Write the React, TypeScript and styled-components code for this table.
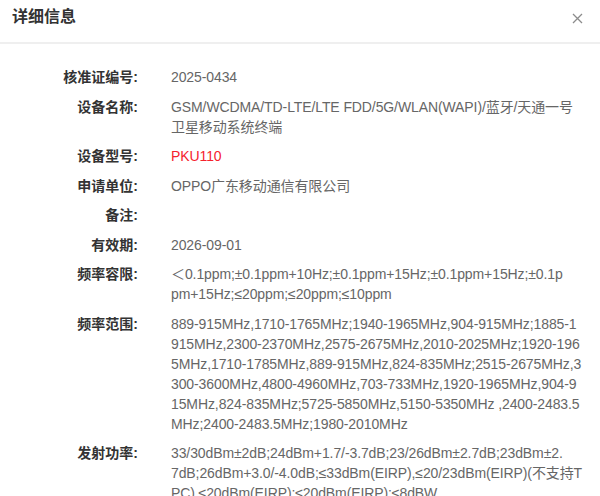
import React from 'react'
import styled, { createGlobalStyle } from 'styled-components'

const GlobalStyle = createGlobalStyle`
  html, body {
    margin: 0;
    padding: 0;
    background: #fff;
  }
  body {
    font-family: "Liberation Sans", "Noto Sans CJK SC", sans-serif;
    overflow: hidden;
  }
`

const Dialog = styled.div`
  width: 600px;
  height: 496px;
  background: #fff;
  overflow: hidden;
`

const Header = styled.div`
  height: 42px;
  padding: 0 12px;
  display: flex;
  align-items: center;
  justify-content: space-between;
  border-bottom: 2px solid #efefef;
`

const Title = styled.h3`
  margin: 0;
  font-size: 16px;
  font-weight: 700;
  color: #333;
  line-height: 22px;
  padding-bottom: 8px;
`

const CloseButton = styled.button`
  width: 22px;
  height: 22px;
  padding: 0;
  margin: 0 0 6px 0;
  border: none;
  background: none;
  display: flex;
  align-items: center;
  justify-content: center;
  cursor: pointer;
`

const Body = styled.div`
  padding-top: 23px;
  display: flex;
  flex-direction: column;
  gap: 9.5px;
`

const Row = styled.div`
  display: grid;
  grid-template-columns: 138px 416px;
  column-gap: 33px;
  font-size: 14px;
  line-height: 20px;
`

const Label = styled.div`
  text-align: right;
  font-weight: 700;
  color: #333;
  white-space: nowrap;
`

const Value = styled.div<{ $accent?: boolean }>`
  color: ${({ $accent }) => ($accent ? '#f5222d' : '#666')};
  letter-spacing: -0.1px;
  min-height: 20px;
`

const Line = styled.span`
  display: block;
  white-space: nowrap;
`

// lines are broken where the source page breaks them
const rows: { label: string; lines: string[]; accent?: boolean }[] = [
  { label: '核准证编号', lines: ['2025-0434'] },
  {
    label: '设备名称',
    lines: ['GSM/WCDMA/TD-LTE/LTE FDD/5G/WLAN(WAPI)/蓝牙/天通一号', '卫星移动系统终端'],
  },
  { label: '设备型号', lines: ['PKU110'], accent: true },
  { label: '申请单位', lines: ['OPPO广东移动通信有限公司'] },
  { label: '备注', lines: [] },
  { label: '有效期', lines: ['2026-09-01'] },
  {
    label: '频率容限',
    lines: [
      '＜0.1ppm;±0.1ppm+10Hz;±0.1ppm+15Hz;±0.1ppm+15Hz;±0.1p',
      'pm+15Hz;≤20ppm;≤20ppm;≤10ppm',
    ],
  },
  {
    label: '频率范围',
    lines: [
      '889-915MHz,1710-1765MHz;1940-1965MHz,904-915MHz;1885-1',
      '915MHz,2300-2370MHz,2575-2675MHz,2010-2025MHz;1920-196',
      '5MHz,1710-1785MHz,889-915MHz,824-835MHz;2515-2675MHz,3',
      '300-3600MHz,4800-4960MHz,703-733MHz,1920-1965MHz,904-9',
      '15MHz,824-835MHz;5725-5850MHz,5150-5350MHz ,2400-2483.5',
      'MHz;2400-2483.5MHz;1980-2010MHz',
    ],
  },
  {
    label: '发射功率',
    lines: [
      '33/30dBm±2dB;24dBm+1.7/-3.7dB;23/26dBm±2.7dB;23dBm±2.',
      '7dB;26dBm+3.0/-4.0dB;≤33dBm(EIRP),≤20/23dBm(EIRP)(不支持T',
      'PC),≤20dBm(EIRP);≤20dBm(EIRP);≤8dBW',
    ],
  },
]

export default function App() {
  return (
    <>
      <GlobalStyle />
      <Dialog>
        <Header>
          <Title>详细信息</Title>
          <CloseButton aria-label="close">
            <svg width="11" height="11" viewBox="0 0 11 11">
              <path d="M1 1L10 10M10 1L1 10" stroke="#8c8c8c" strokeWidth="1.3" fill="none" />
            </svg>
          </CloseButton>
        </Header>
        <Body>
          {rows.map((row) => (
            <Row key={row.label}>
              <Label>{row.label}:</Label>
              <Value $accent={row.accent}>
                {row.lines.map((line) => (
                  <Line key={line}>{line}</Line>
                ))}
              </Value>
            </Row>
          ))}
        </Body>
      </Dialog>
    </>
  )
}
